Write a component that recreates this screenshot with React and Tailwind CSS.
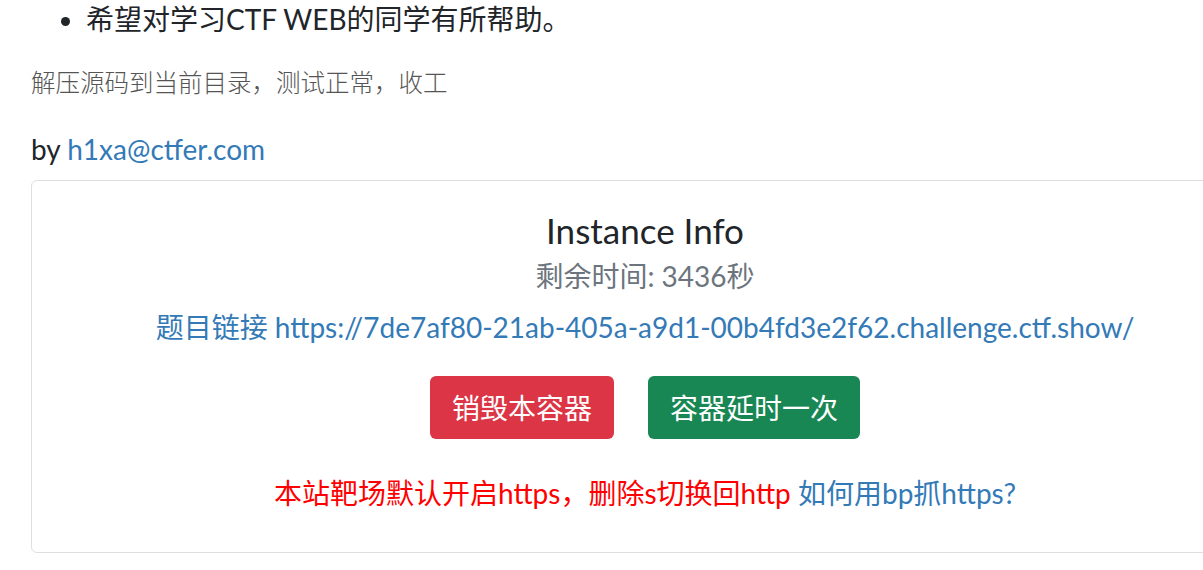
import React from 'react';

const cjk = { fontFamily: 'Lato, "Noto Sans CJK SC", sans-serif' };

const InstanceCard = () => (
    <div className="mt-[10px] w-[1228px] border border-[#dedede] rounded-[6px] pt-[27px] pb-[38px] flex flex-col items-center">
        <h4 className="text-[35px] leading-[44px] text-[#212529]">Instance Info</h4>
        <h5 className="mt-[7px] text-[28px] leading-[34px] text-[#6c757d]">剩余时间: 3436秒</h5>
        <p className="mt-[13px] text-[28px] leading-[42px]">
            <a className="text-[#337ab7]">题目链接 https://7de7af80-21ab-405a-a9d1-00b4fd3e2f62.challenge.ctf.show/</a>
        </p>
        <div className="mt-[28px] flex gap-[34px]">
            <button className="h-[63px] px-[22px] rounded-[6px] bg-[#dc3545] text-white text-[28px]">销毁本容器</button>
            <button className="h-[63px] px-[22px] rounded-[6px] bg-[#198754] text-white text-[28px]">容器延时一次</button>
        </div>
        <p className="mt-[33px] text-[28px] leading-[42px]">
            <span className="text-[#ff0000]">本站靶场默认开启https，删除s切换回http</span>{' '}
            <a className="text-[#337ab7]">如何用bp抓https?</a>
        </p>
    </div>
);

export default function App() {
    return (
        <div className="w-[1203px] h-[570px] overflow-hidden bg-white text-[#212529]" style={cjk}>
            <div className="w-[1300px] px-[31px] -mt-[2px]">
                <ul className="list-disc pl-[55px] text-[28px] leading-[42px]">
                    <li>希望对学习CTF WEB的同学有所帮助。</li>
                </ul>
                <p className="mt-[24px] text-[24.5px] leading-[37px] text-[#555] font-light">解压源码到当前目录，测试正常，收工</p>
                <p className="mt-[27px] text-[28px] leading-[42px]">
                    by <a className="text-[#337ab7]">h1xa@ctfer.com</a>
                </p>
                <InstanceCard />
            </div>
        </div>
    );
}
